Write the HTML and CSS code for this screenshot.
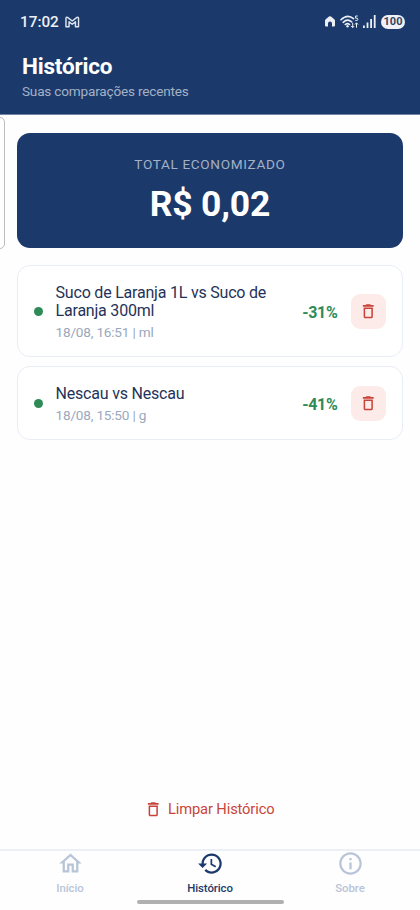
FILE: index.html
```html
<!DOCTYPE html>
<html lang="pt-BR">
<head>
<meta charset="utf-8">
<title>Histórico</title>
<link rel="stylesheet" href="styles.css">
</head>
<body>
<svg class="defs" width="0" height="0" aria-hidden="true">
  <symbol id="trash" viewBox="0 0 24 24"><path d="M6 19c0 1.100.9 2 2 2h8c1.100 0 2-.9 2-2V7H6v12zM8 9h8v10H8V9zm7.500-5l-1-1h-5l-1 1H5v2h14V4z"/></symbol>
</svg>
<div class="app">
  <header class="header">
    <div class="status">
      <span class="clock">17:02</span>
      <svg class="mail" viewBox="0 0 15 12"><path d="M1 11V2.200Q1 .5 2.600 1.200L7.500 5 12.400 1.200Q14 .5 14 2.200V11H10.800V5.800L7.500 8.300 4.200 5.800V11z"/></svg>
      <span class="spacer"></span>
      <svg class="house" viewBox="0 0 10 11"><path d="M0 4.700Q0 3.900.7 3.300L4 .6Q5 -.1 6 .6L9.300 3.300Q10 3.900 10 4.700V9.500Q10 10.500 9 10.500H7V7.500Q7 5.500 5 5.500T3 7.500V10.500H1Q0 10.500 0 9.500z"/></svg>
      <svg class="wifi" viewBox="0 0 19 14">
        <path class="arc" d="M1 4.800Q7.500-1.500 13.500 3.700M3.200 7.300Q7.500 3.200 11.800 7M5.300 9.500Q7.500 7.600 9.600 9.500"/>
        <circle cx="7.500" cy="11.300" r="1.200"/>
        <path class="thin" d="M17.800 1H15.600V3.200Q17.900 2.700 17.900 4.300T15.300 5.500M12.700 8V12.500M11.200 11l1.500 1.700L14.200 11M16.500 12.700V8M15 9.500l1.500-1.700L18 9.500"/>
      </svg>
      <svg class="signal" viewBox="0 0 13 13"><path d="M0 10.500h1.800V13H0zM3.600 7.500h1.800V13H3.600zM7.200 4h1.800v9H7.200zM10.800 0h1.800v13h-1.800z"/></svg>
      <span class="battery">100</span>
    </div>
    <h1 class="title">Histórico</h1>
    <p class="subtitle">Suas comparações recentes</p>
  </header>
  <div class="edge-handle"></div>
  <main class="content">
    <section class="total">
      <div class="total-label">TOTAL ECONOMIZADO</div>
      <div class="total-value">R$ 0,02</div>
    </section>
    <article class="item item-tall">
      <span class="dot"></span>
      <div class="info">
        <div class="name">Suco de Laranja 1L vs Suco de<br>Laranja 300ml</div>
        <div class="date">18/08, 16:51 | ml</div>
      </div>
      <span class="percent">-31%</span>
      <button class="delete" aria-label="Excluir"><svg class="trash"><use href="#trash"/></svg></button>
    </article>
    <article class="item">
      <span class="dot"></span>
      <div class="info">
        <div class="name">Nescau vs Nescau</div>
        <div class="date">18/08, 15:50 | g</div>
      </div>
      <span class="percent">-41%</span>
      <button class="delete" aria-label="Excluir"><svg class="trash"><use href="#trash"/></svg></button>
    </article>
  </main>
  <button class="clear"><svg class="trash"><use href="#trash"/></svg><span>Limpar Histórico</span></button>
  <nav class="tabs">
    <div class="tab">
      <svg class="tab-icon" viewBox="0 0 24 24"><path d="M12 5.690l5 4.500V18h-2v-6H9v6H7v-7.810l5-4.500M12 3L2 12h3v8h6v-6h2v6h6v-8h3L12 3z"/></svg>
      <span>Início</span>
    </div>
    <div class="tab active">
      <svg class="tab-icon" viewBox="0 0 24 24"><path d="M13 3c-4.970 0-9 4.030-9 9H1l3.890 3.890.07.14L9 12H6c0-3.870 3.130-7 7-7s7 3.130 7 7-3.130 7-7 7c-1.930 0-3.680-.79-4.940-2.060l-1.420 1.420C8.270 19.990 10.510 21 13 21c4.970 0 9-4.030 9-9s-4.030-9-9-9zm-1 5v5l4.280 2.540.72-1.210-3.500-2.080V8H12z"/></svg>
      <span>Histórico</span>
    </div>
    <div class="tab">
      <svg class="tab-icon" viewBox="0 0 24 24"><path d="M11 7h2v2h-2zm0 4h2v6h-2zm1-9C6.480 2 2 6.480 2 12s4.480 10 10 10 10-4.480 10-10S17.520 2 12 2zm0 18c-4.410 0-8-3.590-8-8s3.590-8 8-8 8 3.590 8 8-3.590 8-8 8z"/></svg>
      <span>Sobre</span>
    </div>
  </nav>
  <div class="gesture"></div>
</div>
</body>
</html>
```
FILE: styles.css
```css
* { box-sizing: border-box; }
body { margin: 0; background: #fefefe; font-family: Roboto, sans-serif; }
button { border: 0; padding: 0; background: none; font: inherit; }
.defs { position: absolute; }
.app { position: relative; width: 420px; height: 910px; display: flex; flex-direction: column; overflow: hidden; }
.header { height: 115px; flex: none; background: #1b3a6b; color: #fff; border-bottom: 1px solid #7186a6; }
.status { height: 43px; padding: 0 15px 0 20px; display: flex; align-items: center; color: #eceff5; }
.status svg { fill: #eceff5; flex: none; }
.clock { font-size: 15.300px; font-weight: 500; width: 45px; }
.status .mail { width: 14.500px; height: 12px; fill: none; stroke: #dfe5ee; stroke-width: 1.500; stroke-linejoin: round; }
.spacer { flex: 1; }
.house { width: 10px; height: 11px; margin-right: 5px; }
.wifi { width: 19px; height: 14px; margin-right: 4px; }
.status .arc { fill: none; stroke: #eceff5; stroke-width: 1.600; stroke-linecap: round; }
.status .thin { fill: none; stroke: #eceff5; stroke-width: 1; }
.signal { width: 13px; height: 13px; margin-right: 5px; }
.battery { width: 24px; height: 14px; border-radius: 7px; background: #f0f1f7; color: #35445f; font-size: 11px; line-height: 14px; font-weight: 700; text-align: center; }
.title { margin: 9px 0 0 22px; font-size: 22.500px; letter-spacing: -.2px; line-height: 28px; font-weight: 700; }
.subtitle { margin: 3px 0 0 22px; font-size: 13.600px; letter-spacing: -.2px; line-height: 17px; color: #a4b1c5; }
.edge-handle { position: absolute; left: -6px; top: 117px; width: 11px; height: 132px; border: 1px solid #bdbdbd; border-radius: 5px; }
.content { padding: 17.500px 17.500px 0 17.400px; }
.total { height: 115px; border-radius: 13px; background: #1b3a6b; color: #fff; text-align: center; padding-top: 22px; margin-bottom: 17.500px; }
.total-label { font-size: 13.600px; line-height: 18px; letter-spacing: .650px; color: #a4b1c5; }
.total-value { margin-top: 11px; font-size: 35.500px; letter-spacing: -.2px; line-height: 41px; font-weight: 700; }
.item { height: 74px; border: 1px solid #e9edf5; border-radius: 13px; background: #fff; display: flex; align-items: center; padding: 0 15.500px 0 15.600px; margin-bottom: 9px; }
.item-tall { height: 92px; }
.dot { width: 9px; height: 9px; border-radius: 50%; background: #2e8b57; flex: none; margin-right: 12.600px; }
.info { flex: 1; white-space: nowrap; padding-top: 3px; }
.name { font-size: 16px; letter-spacing: -.21px; line-height: 18px; color: #1f3358; }
.date { margin-top: 4px; font-size: 13.600px; letter-spacing: -.2px; line-height: 17px; color: #9aa8bd; }
.percent { font-size: 16px; letter-spacing: -.3px; font-weight: 700; color: #2e8b57; margin-right: 13.500px; padding-top: 2px; }
.delete { width: 35px; height: 35px; border-radius: 9px; background: #fdebea; display: grid; place-items: center; }
.trash { width: 18.500px; height: 18.500px; fill: #c8443a; }
.clear { margin-top: auto; height: 40px; display: flex; justify-content: center; align-items: center; gap: 6px; color: #c8443a; font-size: 14.700px; letter-spacing: -.13px; margin-bottom: 20px; padding-right: 2px; }
.tabs { flex: none; height: 61px; border-top: 2px solid #eceff5; display: flex; padding: 0; }
.tab { flex: 1; display: flex; flex-direction: column; align-items: center; color: #b8c4d8; font-size: 11.400px; letter-spacing: -.08px; line-height: 14px; font-weight: 500; }
.tab-icon { width: 27px; height: 27px; fill: currentColor; margin-top: -1px; margin-bottom: 4px; }
.active { color: #1b3a6b; }
.gesture { position: absolute; left: 136.500px; top: 900px; width: 147px; height: 4px; border-radius: 2px; background: #b0b0b0; }
```
